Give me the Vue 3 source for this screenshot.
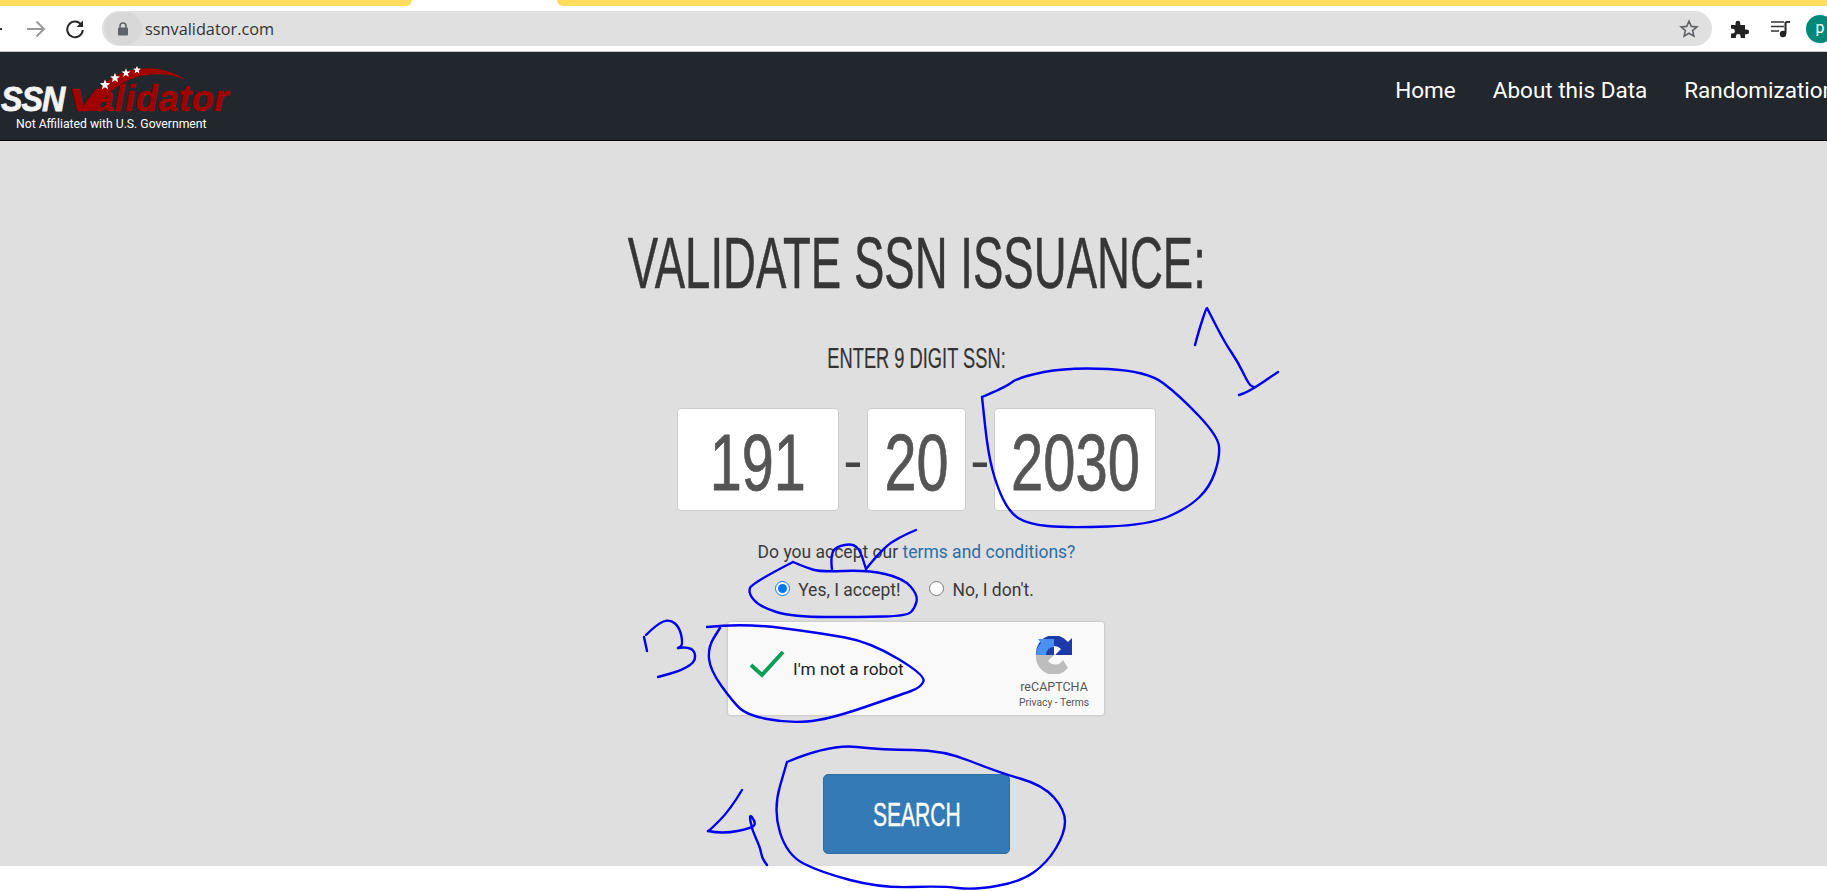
<script setup>
const navLinks = ['Home', 'About this Data', 'Randomization']

const stars = [
  [105, 85, 5.5],
  [115, 78, 5.2],
  [126, 73, 4.8],
  [137, 70, 4.2]
]

function starPoints([cx, cy, r]) {
  const pts = []
  for (let i = 0; i < 10; i++) {
    const rad = i % 2 ? r * 0.42 : r
    const a = (Math.PI / 5) * i - Math.PI / 2
    pts.push(`${(cx + rad * Math.cos(a)).toFixed(1)},${(cy + rad * Math.sin(a)).toFixed(1)}`)
  }
  return pts.join(' ')
}

// pen scribbles on top of the screenshot, smoothed through midpoints
const scribbles = [
  [[982,397],[1004,388],[1019,377],[1069,367],[1147,371],[1179,395],[1218,436],[1220,457],[1210,487],[1188,508],[1149,525],[1067,528],[1028,524],[1010,513],[997,487],[988,453],[982,397]],
  [[1195,345],[1199,330],[1206,309],[1207,308],[1207,308],[1208,310],[1225,343],[1238,362],[1249,385],[1254,387]],
  [[1239,395],[1247,393],[1278,372]],
  [[793,562],[752,583],[748,593],[760,607],[793,617],[860,617],[907,616],[915,608],[918,595],[903,578],[867,570],[820,572],[805,567],[793,562]],
  [[832,570],[830,553],[840,545],[858,544],[866,569]],
  [[866,569],[883,548],[900,537],[916,530]],
  [[646,635],[657,624],[670,619],[680,628],[683,645],[678,648]],
  [[678,648],[692,646],[697,660],[683,670],[658,677]],
  [[644,637],[647,651]],
  [[707,627],[743,623],[820,633],[870,642],[925,675],[922,687],[900,695],[827,720],[787,723],[747,715],[733,702],[710,670],[708,647],[720,628]],
  [[742,790],[730,810],[710,830],[708,831]],
  [[708,831],[723,834],[752,828],[756,823],[749,813],[752,830],[760,847],[762,858],[767,865]],
  [[787,762],[830,744],[883,750],[943,750],[997,772],[1043,785],[1065,810],[1065,833],[1047,863],[1020,882],[973,890],[943,886],[880,888],[820,872],[787,855],[773,810],[787,762]]
]

function smooth(pts) {
  let d = `M${pts[0][0]} ${pts[0][1]}`
  for (let i = 1; i < pts.length - 1; i++) {
    const mx = (pts[i][0] + pts[i + 1][0]) / 2
    const my = (pts[i][1] + pts[i + 1][1]) / 2
    d += ` Q${pts[i][0]} ${pts[i][1]} ${mx} ${my}`
  }
  const last = pts[pts.length - 1]
  return d + ` L${last[0]} ${last[1]}`
}
</script>

<template>
  <div class="page">
    <div class="tabstrip">
      <div class="tab-left"></div>
      <div class="tab-gap"></div>
      <div class="tab-right"></div>
    </div>

    <div class="toolbar">
      <svg class="tool-icon back" width="20" height="20" viewBox="0 0 20 20">
        <path d="M2 10h17M9.5 2.5 2 10l7.5 7.5" fill="none" stroke="#333" stroke-width="2" />
      </svg>
      <svg class="tool-icon forward" width="20" height="20" viewBox="0 0 20 20">
        <path d="M1 10h17M10.5 2.5 18 10l-7.5 7.5" fill="none" stroke="#9a9a9a" stroke-width="2" />
      </svg>
      <svg class="tool-icon reload" width="20" height="20" viewBox="0 0 20 20">
        <path d="M16.6 6.2A7.8 7.8 0 1 0 17.8 11" fill="none" stroke="#2a2a2a" stroke-width="2" />
        <path d="M18 1.5V8h-6.5z" fill="#2a2a2a" />
      </svg>
      <div class="omnibox">
        <div class="lock-chip">
          <svg width="12" height="14" viewBox="0 0 12 14">
            <path d="M3 6V4a3 3 0 0 1 6 0v2" fill="none" stroke="#5f6368" stroke-width="1.5" />
            <rect x="1" y="5.5" width="10" height="8" rx="1" fill="#5f6368" />
          </svg>
        </div>
        <span class="url">ssnvalidator.com</span>
        <svg class="bookmark" width="20" height="20" viewBox="0 0 20 20">
          <path d="M10 2.2l2.3 5.2 5.6.5-4.3 3.7 1.3 5.5L10 14.2l-4.9 2.9 1.3-5.5-4.3-3.7 5.6-.5z" fill="none" stroke="#5f6368" stroke-width="1.6" />
        </svg>
      </div>
      <svg class="tool-icon puzzle" width="20" height="20" viewBox="0 0 20 20">
        <path d="M1 6h4.5V4.2a2.4 2.4 0 0 1 4.8 0V6H15v4.5h1.7a2.4 2.4 0 0 1 0 4.8H15V19h-4.3v-1.6a2.4 2.4 0 0 0-4.8 0V19H1v-4.4h1.5a2.4 2.4 0 0 0 0-4.8H1z" fill="#222" />
      </svg>
      <svg class="tool-icon media" width="20" height="18" viewBox="0 0 20 18">
        <path d="M0 2h13M0 6.5h13M0 11h8" stroke="#333" stroke-width="1.6" fill="none" />
        <path d="M14.5 2v11.5" stroke="#222" stroke-width="2" fill="none" />
        <path d="M14.5 2H19" stroke="#222" stroke-width="1.8" fill="none" />
        <circle cx="12" cy="14" r="3.2" fill="#222" />
      </svg>
      <div class="avatar">p</div>
    </div>

    <nav class="navbar">
      <a class="brand">
        <div class="brand-title">
          <span class="brand-ssn">SSN</span>
          <span class="brand-val"><span class="brand-v">V</span>alidator</span>
        </div>
        <svg class="swoosh" width="200" height="60" viewBox="0 0 200 60">
          <g transform="translate(0 -62)">
            <path d="M85 111C92 92 110 73 136 69 156 66 173 71 186 80 170 73 152 73 137 77 119 82 104 95 96 111z" fill="#a00000" />
            <polygon v-for="s in stars" :key="s[0]" :points="starPoints(s)" fill="#fff" />
          </g>
        </svg>
        <div class="brand-tag">Not Affiliated with U.S. Government</div>
      </a>
      <div class="nav-links">
        <a v-for="link in navLinks" :key="link" class="nav-link">{{ link }}</a>
      </div>
    </nav>

    <main class="content">
      <h1 class="title"><span class="squeeze">VALIDATE SSN ISSUANCE:</span></h1>
      <h2 class="subtitle"><span class="squeeze">ENTER 9 DIGIT SSN:</span></h2>

      <div class="ssn-row">
        <div class="ssn-box wide"><span class="squeeze">191</span></div>
        <span class="dash">-</span>
        <div class="ssn-box short"><span class="squeeze">20</span></div>
        <span class="dash">-</span>
        <div class="ssn-box wide"><div class="clip"><span class="squeeze">2030</span></div></div>
      </div>

      <p class="terms">Do you accept our <a class="terms-link">terms and conditions?</a></p>

      <div class="radios">
        <label class="radio-item">
          <input type="radio" name="accept" checked />
          <span>Yes, I accept!</span>
        </label>
        <label class="radio-item">
          <input type="radio" name="accept" />
          <span>No, I don't.</span>
        </label>
      </div>

      <div class="captcha">
        <svg class="check" width="36" height="28" viewBox="0 0 36 28">
          <path d="M2 15l11 10L34 2" fill="none" stroke="#0f9d58" stroke-width="4" />
        </svg>
        <span class="captcha-label">I'm not a robot</span>
        <div class="captcha-brand">
          <svg width="38" height="38" viewBox="0 0 38 38">
            <path d="M1 19A18 18 0 0 1 33 6L37 2V19H20L26 13A10 10 0 0 0 19 10V19H11Z" fill="#1c3aa9" />
            <path d="M1 19A18 18 0 0 1 6 7L3 3H19V11A8 8 0 0 0 11 19z" fill="#4a90f2" />
            <path d="M1 19H19L13 25A9 9 0 0 0 28 24L33 32A18 18 0 0 1 1 19z" fill="#bdbdbd" />
          </svg>
          <div class="captcha-name">reCAPTCHA</div>
          <div class="captcha-links">Privacy - Terms</div>
        </div>
      </div>

      <button class="search-btn" type="button"><span class="squeeze">SEARCH</span></button>
    </main>

    <svg class="pen" width="1827" height="891" viewBox="0 0 1827 891">
      <path v-for="(s, i) in scribbles" :key="i" :d="smooth(s)" />
    </svg>
  </div>
</template>

<style>
html, body {
  margin: 0;
  background: #fff;
  overflow: hidden;
}
</style>

<style scoped>
.page {
  position: relative;
  width: 1827px;
  height: 891px;
  overflow: hidden;
  background: #fff;
  font-family: Roboto, "Liberation Sans", sans-serif;
}

.tabstrip {
  display: flex;
  height: 6px;
}
.tab-left {
  width: 412px;
  background: #ffdd5c;
  border-bottom-right-radius: 8px;
}
.tab-gap {
  width: 145px;
}
.tab-right {
  flex: 1;
  background: #ffdd5c;
  border-bottom-left-radius: 8px;
}

.toolbar {
  display: flex;
  align-items: center;
  height: 45px;
  border-bottom: 1px solid #c8c8c8;
  background: #fff;
}
.tool-icon {
  flex: none;
}
.back {
  margin-left: -17px;
}
.forward {
  margin-left: 23px;
}
.reload {
  margin-left: 19px;
}
.omnibox {
  flex: none;
  display: flex;
  align-items: center;
  width: 1610px;
  height: 35px;
  margin-left: 17px;
  border-radius: 18px;
  background: #e0e0e0;
}
.lock-chip {
  display: flex;
  align-items: center;
  justify-content: center;
  width: 38px;
  height: 33px;
  margin-left: 2px;
  border-radius: 17px;
  background: #d8d8d8;
}
.url {
  margin-left: 3px;
  font-size: 16.3px;
  color: #333;
  font-family: "Open Sans", sans-serif;
}
.bookmark {
  margin-left: auto;
  margin-right: 13px;
}
.puzzle {
  margin-left: 18px;
}
.media {
  margin-left: 21px;
}
.avatar {
  flex: none;
  width: 28px;
  height: 28px;
  margin-left: 15px;
  border-radius: 50%;
  background: #00897b;
  color: #fff;
  font-size: 16px;
  line-height: 25px;
  text-align: center;
}

.navbar {
  display: flex;
  align-items: center;
  justify-content: space-between;
  box-sizing: border-box;
  height: 89px;
  border-bottom: 1px solid #000;
  background: #22272e;
}
.brand {
  position: relative;
  width: 240px;
  height: 88px;
}
.swoosh {
  position: absolute;
  top: 10px;
  left: 0;
}
.brand-title {
  position: absolute;
  top: 27px;
  left: 1px;
  display: flex;
  align-items: baseline;
  font-family: "Liberation Sans", sans-serif;
  font-style: italic;
  font-weight: 700;
  white-space: nowrap;
}
.brand-ssn {
  display: inline-block;
  width: 67px;
  font-size: 35px;
  line-height: 40px;
  color: #f4f4f4;
  letter-spacing: -1px;
  transform: scaleX(0.92);
  transform-origin: left;
  -webkit-text-stroke: 0.8px #f4f4f4;
}
.brand-val {
  font-size: 36px;
  line-height: 40px;
  letter-spacing: 0.6px;
  color: #a00000;
  -webkit-text-stroke: 0.6px #a00000;
}
.brand-v {
  display: inline-block;
  width: 26px;
  font-size: 32px;
  transform: scaleX(1.5);
  transform-origin: left;
}
.brand-tag {
  position: absolute;
  top: 65px;
  left: 16px;
  font-size: 12.2px;
  color: #fff;
  white-space: nowrap;
}
.nav-links {
  flex: none;
  display: flex;
  gap: 37px;
  margin-right: -8px;
  padding-bottom: 12px;
}
.nav-link {
  font-size: 22.5px;
  color: #fff;
  white-space: nowrap;
}

.content {
  display: flex;
  flex-direction: column;
  align-items: center;
  box-sizing: border-box;
  height: 725px;
  padding-left: 6px;
  background: #dfdfdf;
  color: #333;
}
.squeeze {
  display: inline-block;
  font-family: "Liberation Sans", sans-serif;
  white-space: nowrap;
}
.title {
  margin: 84px 0 0;
  font-size: 72px;
  font-weight: 400;
  line-height: 76px;
  color: #363636;
}
.title .squeeze {
  transform: scaleX(0.633);
  -webkit-text-stroke: 0.5px #363636;
}
.subtitle {
  margin: 41px 0 0;
  font-size: 29px;
  font-weight: 400;
  line-height: 30px;
  color: #333;
}
.subtitle .squeeze {
  transform: scaleX(0.63);
  -webkit-text-stroke: 0.2px #333;
}
.ssn-row {
  display: flex;
  align-items: center;
  margin-top: 35px;
}
.ssn-box {
  display: flex;
  align-items: center;
  justify-content: center;
  box-sizing: border-box;
  height: 103px;
  padding-top: 6px;
  border: 1px solid #ccc;
  border-radius: 4px;
  background: #fff;
  font-size: 80px;
  line-height: 92px;
  color: #555;
}
.ssn-box .squeeze {
  transform: scaleX(0.72);
  -webkit-text-stroke: 0.8px #555;
}
.wide {
  width: 162px;
}
.short {
  width: 99px;
}
.clip {
  width: 128px;
  overflow: hidden;
}
.clip .squeeze {
  transform: scaleX(0.725);
  transform-origin: left;
}
.dash {
  width: 28px;
  text-align: center;
  font-size: 58px;
  line-height: 1;
  color: #444;
  font-family: "Liberation Sans", sans-serif;
}
.terms {
  margin: 29px 0 0;
  font-size: 17.5px;
  line-height: 24px;
  color: #3a3a3a;
}
.terms-link {
  color: #2e6da4;
}
.radios {
  display: flex;
  gap: 29px;
  margin-top: 14px;
  padding-right: 24px;
  font-size: 17.5px;
  line-height: 24px;
  color: #3a3a3a;
}
.radio-item {
  display: flex;
  align-items: center;
  gap: 8px;
}
.radio-item input {
  width: 15px;
  height: 15px;
  margin: 0 0 3px;
}
.captcha {
  position: relative;
  display: flex;
  align-items: center;
  box-sizing: border-box;
  width: 376px;
  height: 93px;
  margin-top: 20px;
  margin-left: -1px;
  padding-left: 21px;
  border-radius: 3px;
  background: #f9f9f9;
  box-shadow: 0 0 3px rgba(0, 0, 0, 0.22);
}
.check {
  margin-bottom: 9px;
}
.captcha-label {
  margin-left: 8px;
  font-size: 17.3px;
  color: #222;
}
.captcha-brand {
  display: flex;
  flex-direction: column;
  align-items: center;
  margin-top: 8px;
  margin-left: auto;
  margin-right: 15px;
  color: #555;
}
.captcha-name {
  margin-top: 5px;
  font-size: 12.5px;
  line-height: 15px;
}
.captcha-links {
  margin-top: 3px;
  font-size: 10.3px;
  line-height: 12px;
}
.search-btn {
  width: 187px;
  height: 80px;
  margin-top: 59px;
  border: 1px solid #2e6da4;
  border-radius: 5px;
  background: #337ab7;
  color: #fff;
  font-size: 34px;
}
.search-btn .squeeze {
  transform: scaleX(0.62);
  -webkit-text-stroke: 0.4px #fff;
}

.pen {
  position: absolute;
  top: 0;
  left: 0;
  pointer-events: none;
}
.pen path {
  fill: none;
  stroke: #0000f0;
  stroke-width: 2.4;
  stroke-linecap: round;
  stroke-linejoin: round;
}
</style>
